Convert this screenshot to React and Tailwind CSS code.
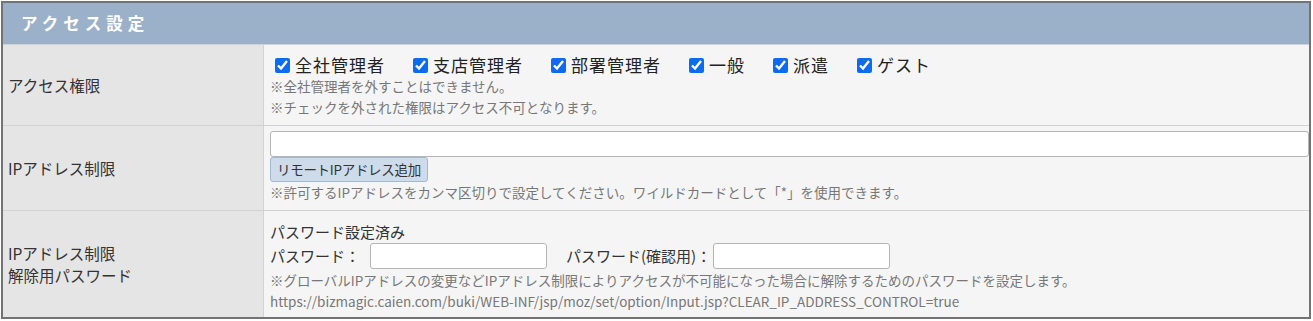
import React from 'react';

const roles = ['全社管理者', '支店管理者', '部署管理者', '一般', '派遣', 'ゲスト'];

function Row({ label, children, last }) {
    return (
        <div className={`grid grid-cols-[261px_1fr] ${last ? '' : 'border-b border-[#d2d2d2]'}`}>
            <div className="flex items-center bg-[#e5e5e5] border-r border-[#d2d2d2] px-[5px] text-[15.5px] text-[#333] leading-[22px]">
                {label}
            </div>
            <div className="bg-[#f5f5f5] pl-[6px]">{children}</div>
        </div>
    );
}

export default function App() {
    const font = { fontFamily: '"Noto Sans CJK JP", "Noto Sans", sans-serif' };
    const note = "text-[13.5px] text-[#777] leading-[21px]";
    const inputClass = "h-[26px] bg-white border border-[#b5b5b5] rounded-[3px] outline-none shrink-0";

    return (
        <div className="bg-white pt-[1px] pl-[1px] w-[1313px] h-[321px]" style={font}>
            <div className="w-[1310px] border-2 border-[#737373]">
                {/* Header */}
                <div className="h-[41px] bg-[#9bb0c9] flex items-center pl-[18px]">
                    <span className="text-white font-bold text-[16.5px] tracking-[5px]">アクセス設定</span>
                </div>

                <div className="border-t border-[#d2d2d2]">
                    {/* アクセス権限 */}
                    <Row label="アクセス権限">
                        <div className="h-[80px] pt-[9px]">
                            <div className="flex items-center h-[22px] pl-[5px] gap-[28px]">
                                {roles.map((r) => (
                                    <label key={r} className="flex items-center gap-[5px] text-[17px] text-[#222] leading-[22px]">
                                        <input type="checkbox" defaultChecked className="w-[15px] h-[15px] accent-[#0b6cf0] m-0" />
                                        <span className="tracking-[1px]">{r}</span>
                                    </label>
                                ))}
                            </div>
                            <p className={note}>※全社管理者を外すことはできません。</p>
                            <p className={note}>※チェックを外された権限はアクセス不可となります。</p>
                        </div>
                    </Row>

                    {/* IPアドレス制限 */}
                    <Row label="IPアドレス制限">
                        <div className="h-[84px] pt-[5px] flex flex-col">
                            <input type="text" className={`${inputClass} w-full`} />
                            <div className="flex">
                                <button type="button" className="h-[25px] px-[6px] bg-[#cddbeb] border border-[#a5b8cc] rounded-[3px] text-[13.5px] text-[#333] leading-none tracking-[-0.3px]">
                                    リモートIPアドレス追加
                                </button>
                            </div>
                            <p className={note}>※許可するIPアドレスをカンマ区切りで設定してください。ワイルドカードとして「*」を使用できます。</p>
                        </div>
                    </Row>

                    {/* 解除用パスワード */}
                    <Row last label={<span>IPアドレス制限<br />解除用パスワード</span>}>
                        <div className="h-[106px] pt-[10px]">
                            <p className="text-[15px] text-[#333] leading-[21px]">パスワード設定済み</p>
                            <div className="flex items-center h-[28px] text-[15px] text-[#333]">
                                <span>パスワード：</span>
                                <input type="password" className={`${inputClass} w-[177px] ml-[10px]`} />
                                <span className="ml-[19px]">パスワード(確認用)：</span>
                                <input type="password" className={`${inputClass} w-[177px] ml-[2px]`} />
                            </div>
                            <p className={note}>※グローバルIPアドレスの変更などIPアドレス制限によりアクセスが不可能になった場合に解除するためのパスワードを設定します。</p>
                            <p className={note}>https://bizmagic.caien.com/buki/WEB-INF/jsp/moz/set/option/Input.jsp?CLEAR_IP_ADDRESS_CONTROL=true</p>
                        </div>
                    </Row>
                </div>
            </div>
        </div>
    );
}
